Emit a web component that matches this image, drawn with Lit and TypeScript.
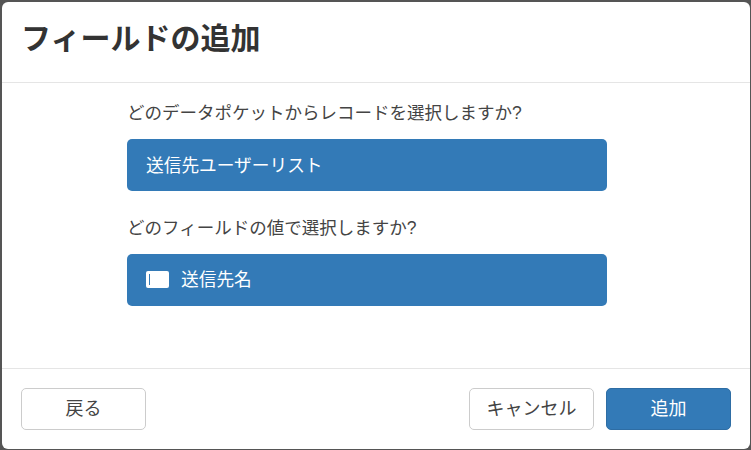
import { LitElement, html, css } from "lit";
import { customElement } from "lit/decorators.js";

@customElement("app-root")
export class AppRoot extends LitElement {
  static styles = css`
    :host {
      display: block;
      width: 751px;
      height: 450px;
      box-sizing: border-box;
      padding: 2px 1px 1px 2px;
      background: #555;
      font-family: "Liberation Sans", "Noto Sans CJK JP", sans-serif;
      color: #333;
    }
    .modal {
      height: 447px;
      background: #fff;
      border-radius: 6px;
      display: flex;
      flex-direction: column;
      overflow: hidden;
    }
    .header {
      height: 81px;
      box-sizing: border-box;
      border-bottom: 1px solid #e5e5e5;
      padding: 16px 19px;
      flex: none;
    }
    h4 {
      margin: 0;
      font-size: 30px;
      line-height: 42px;
      font-weight: 700;
      color: #333;
    }
    .body {
      flex: 1;
      padding: 18px 125px 0;
    }
    .label {
      font-size: 17.5px;
      line-height: 24px;
      margin-bottom: 14px;
      color: #444;
      font-weight: 400;
    }
    .select {
      width: 480px;
      height: 52px;
      box-sizing: border-box;
      background: #337ab7;
      border-radius: 5px;
      color: #fff;
      font-size: 17.7px;
      display: flex;
      align-items: center;
      padding: 0 19px 3px;
      margin-bottom: 25px;
    }
    .select.with-chip {
      padding-bottom: 5px;
    }
    .chip {
      width: 23px;
      height: 17px;
      background: #fff;
      border-radius: 2px;
      margin: 3px 12px 0 0;
      display: flex;
      align-items: center;
      padding-left: 3px;
      box-sizing: border-box;
    }
    .chip i {
      display: block;
      width: 1px;
      height: 11px;
      background: #337ab7;
    }
    .footer {
      height: 81px;
      flex: none;
      box-sizing: border-box;
      border-top: 1px solid #e5e5e5;
      padding: 19px 19px 0 19px;
      display: flex;
      gap: 12px;
    }
    .btn {
      width: 125px;
      height: 42px;
      box-sizing: border-box;
      border: 1px solid #ccc;
      border-radius: 5px;
      background: #fff;
      color: #444;
      font: inherit;
      font-size: 18px;
      padding: 0 0 4px;
    }
    .spacer { flex: 1; }
    .primary {
      background: #337ab7;
      border-color: #2e6da4;
      color: #fff;
    }
  `;

  render() {
    return html`
      <div class="modal">
        <div class="header"><h4>フィールドの追加</h4></div>
        <div class="body">
          <div class="label">どのデータポケットからレコードを選択しますか?</div>
          <div class="select">送信先ユーザーリスト</div>
          <div class="label">どのフィールドの値で選択しますか?</div>
          <div class="select with-chip"><span class="chip"><i></i></span>送信先名</div>
        </div>
        <div class="footer">
          <button class="btn">戻る</button>
          <span class="spacer"></span>
          <button class="btn">キャンセル</button>
          <button class="btn primary">追加</button>
        </div>
      </div>
    `;
  }
}
